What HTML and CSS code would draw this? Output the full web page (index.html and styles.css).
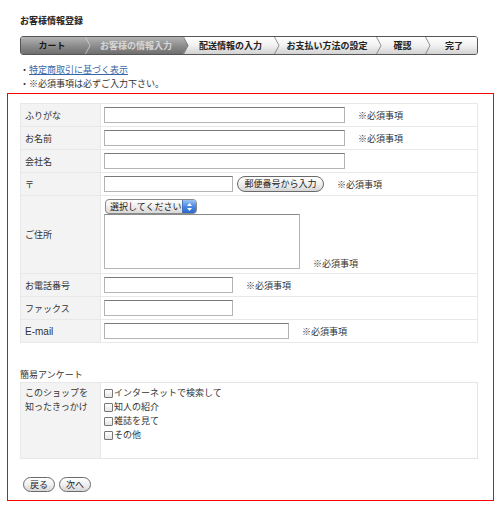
FILE: index.html
```html
<!DOCTYPE html>
<html lang="ja">
<head>
<meta charset="utf-8">
<title>お客様情報登録</title>
<link rel="stylesheet" href="styles.css">
</head>
<body>
<svg class="defs" width="0" height="0" aria-hidden="true">
  <defs>
    <linearGradient id="g-dark" x1="0" y1="0" x2="0" y2="1">
      <stop offset="0" stop-color="#b4b4b4"/>
      <stop offset="0.5" stop-color="#8e8e8e"/>
      <stop offset="1" stop-color="#6e6e6e"/>
    </linearGradient>
    <linearGradient id="g-light" x1="0" y1="0" x2="0" y2="1">
      <stop offset="0" stop-color="#ffffff"/>
      <stop offset="0.5" stop-color="#f1f1f1"/>
      <stop offset="1" stop-color="#d2d2d2"/>
    </linearGradient>
  </defs>
</svg>

<div class="page">
  <header class="head">
    <h1 class="title">お客様情報登録</h1>

    <ol class="steps">
      <li class="step step-done w1">カート</li>
      <li class="sep"><svg viewBox="0 0 8 17" preserveAspectRatio="none"><polygon points="0,0 2,0 7,8.5 2,17 0,17" fill="url(#g-dark)"/><polygon points="2,0 8,0 8,17 2,17 7,8.5" fill="url(#g-dark)"/><polyline points="2,-1 7,8.5 2,18" fill="none" stroke="#c8c8c8" stroke-width="0.8"/></svg></li>
      <li class="step step-current w2">お客様の情報入力</li>
      <li class="sep"><svg viewBox="0 0 8 17" preserveAspectRatio="none"><polygon points="0,0 2,0 7,8.5 2,17 0,17" fill="url(#g-dark)"/><polygon points="2,0 8,0 8,17 2,17 7,8.5" fill="url(#g-light)"/><polyline points="2,-1 7,8.5 2,18" fill="none" stroke="#555" stroke-width="0.8"/></svg></li>
      <li class="step w3">配送情報の入力</li>
      <li class="sep"><svg viewBox="0 0 8 17" preserveAspectRatio="none"><polygon points="0,0 8,0 8,17 0,17" fill="url(#g-light)"/><polyline points="2,-1 7,8.5 2,18" fill="none" stroke="#777" stroke-width="0.8"/></svg></li>
      <li class="step w4">お支払い方法の設定</li>
      <li class="sep"><svg viewBox="0 0 8 17" preserveAspectRatio="none"><polygon points="0,0 8,0 8,17 0,17" fill="url(#g-light)"/><polyline points="2,-1 7,8.5 2,18" fill="none" stroke="#777" stroke-width="0.8"/></svg></li>
      <li class="step w5">確認</li>
      <li class="sep"><svg viewBox="0 0 8 17" preserveAspectRatio="none"><polygon points="0,0 8,0 8,17 0,17" fill="url(#g-light)"/><polyline points="2,-1 7,8.5 2,18" fill="none" stroke="#777" stroke-width="0.8"/></svg></li>
      <li class="step w6">完了</li>
    </ol>

    <ul class="notes">
      <li>・<a href="#" class="link">特定商取引に基づく表示</a></li>
      <li>・※必須事項は必ずご入力下さい。</li>
    </ul>
  </header>

  <form class="form-box">
    <table class="form-table">
      <tr>
        <th>ふりがな</th>
        <td><input class="field w-long" type="text"><span class="req">※必須事項</span></td>
      </tr>
      <tr>
        <th>お名前</th>
        <td><input class="field w-long" type="text"><span class="req">※必須事項</span></td>
      </tr>
      <tr>
        <th>会社名</th>
        <td><input class="field w-long" type="text"></td>
      </tr>
      <tr>
        <th>〒</th>
        <td><input class="field w-short" type="text"><button type="button" class="pill zip-btn">郵便番号から入力</button><span class="req">※必須事項</span></td>
      </tr>
      <tr class="row-address">
        <th>ご住所</th>
        <td>
          <div class="select">
            <span class="select-text">選択してください</span>
            <span class="select-arrow"><svg width="7" height="10" viewBox="0 0 7 10"><polygon points="3.5,1 6,4 1,4" fill="#fff"/><polygon points="1,6 6,6 3.5,9" fill="#fff"/></svg></span>
          </div>
          <div class="address-line">
            <textarea class="area"></textarea><span class="req">※必須事項</span>
          </div>
        </td>
      </tr>
      <tr>
        <th>お電話番号</th>
        <td><input class="field w-short" type="text"><span class="req">※必須事項</span></td>
      </tr>
      <tr>
        <th>ファックス</th>
        <td><input class="field w-short" type="text"></td>
      </tr>
      <tr>
        <th class="latin">E-mail</th>
        <td><input class="field w-mail" type="text"><span class="req">※必須事項</span></td>
      </tr>
    </table>

    <h2 class="survey-title">簡易アンケート</h2>
    <table class="form-table survey">
      <tr>
        <th>このショップを<br>知ったきっかけ</th>
        <td>
          <label class="check"><input type="checkbox">インターネットで検索して</label>
          <label class="check"><input type="checkbox">知人の紹介</label>
          <label class="check"><input type="checkbox">雑誌を見て</label>
          <label class="check"><input type="checkbox">その他</label>
        </td>
      </tr>
    </table>

    <div class="actions">
      <button type="button" class="pill nav-btn">戻る</button>
      <button type="button" class="pill nav-btn">次へ</button>
    </div>
  </form>
</div>
</body>
</html>
```

FILE: styles.css
```css
html, body {
  margin: 0;
  padding: 0;
  background: #fff;
}

body {
  font-family: "Liberation Sans", "Noto Sans CJK JP", sans-serif;
  font-size: 9px;
  color: #333;
}

.defs {
  position: absolute;
  width: 0;
  height: 0;
}

.page {
  padding: 15px 0 0 7px;
}

.head {
  margin-left: 13px;
  width: 458px;
}

.title {
  margin: 0;
  font-size: 9px;
  line-height: 12px;
  font-weight: bold;
  color: #222;
}

/* progress bar */
.steps {
  display: flex;
  margin: 9px 0 0;
  padding: 0;
  list-style: none;
  height: 17px;
  border: 1px solid #555;
  border-radius: 3px;
  overflow: hidden;
  background: linear-gradient(#fff, #f1f1f1 50%, #d2d2d2);
}

.step {
  display: flex;
  align-items: center;
  justify-content: center;
  height: 17px;
  font-weight: bold;
  color: #222;
  background: linear-gradient(#fff, #f1f1f1 50%, #d2d2d2);
  white-space: nowrap;
}

.step-done,
.step-current {
  background: linear-gradient(#b4b4b4, #8e8e8e 50%, #6e6e6e);
}

.step-done {
  color: #1a1a1a;
}

.step-current {
  color: #d6d6d6;
}

.w1 { width: 62px; }
.w2 { width: 90px; }
.w3 { width: 83px; }
.w4 { width: 94px; }
.w5 { width: 41px; }
.w6 { width: 46px; }

.sep {
  width: 8px;
  height: 17px;
}

.sep svg {
  display: block;
  width: 8px;
  height: 17px;
}

.notes {
  margin: 8px 0 0;
  padding: 0;
  list-style: none;
  line-height: 14px;
  color: #333;
}

.link {
  color: #3a66a8;
  text-decoration: underline;
}

/* form container */
.form-box {
  margin: 2px 0 0;
  width: 487px;
  border: 1px solid #f00;
  padding: 9px 0 8px 12px;
  box-sizing: border-box;
}

.form-table {
  width: 458px;
  border-collapse: collapse;
}

.form-table th,
.form-table td {
  border: 1px solid #e8e8e8;
  height: 22px;
  padding: 0;
  vertical-align: middle;
}

.form-table th {
  width: 75px;
  padding-left: 4px;
  text-align: left;
  font-weight: normal;
  background: #f3f3f3;
  color: #333;
  white-space: nowrap;
}

.form-table th.latin {
  font-size: 10px;
}

.form-table td {
  padding-left: 3px;
  background: #fff;
  white-space: nowrap;
}

.field {
  display: inline-block;
  box-sizing: border-box;
  height: 16px;
  margin: 0;
  padding: 0 2px;
  border: 1px solid #b4b4b4;
  border-top-color: #7a7a7a;
  background: #fff;
  vertical-align: middle;
  font: inherit;
}

.w-long { width: 241px; }
.w-short { width: 129px; }
.w-mail { width: 185px; }

.req {
  margin-left: 13px;
  vertical-align: middle;
  color: #333;
}

.pill {
  font-family: inherit;
  font-size: 9px;
  color: #222;
  height: 16px;
  padding: 0 6px;
  border: 1px solid #6a6a6a;
  border-radius: 8px;
  background: linear-gradient(#ffffff, #f0f0f0 50%, #d6d6d6);
  vertical-align: middle;
  line-height: 14px;
}

.zip-btn {
  width: 87px;
  margin-left: 4px;
  padding: 0;
}

.zip-btn + .req {
  margin-left: 13px;
}

/* address row */
.row-address td {
  height: 76px;
  padding-top: 3px;
  padding-bottom: 4px;
  vertical-align: top;
  box-sizing: border-box;
}

.row-address th {
  vertical-align: middle;
}

.select {
  display: inline-flex;
  align-items: stretch;
  height: 15px;
  width: 92px;
  margin-left: 1px;
  box-sizing: border-box;
  border: 1px solid #8a8a8a;
  border-radius: 4px;
  overflow: hidden;
  background: linear-gradient(#ffffff, #eeeeee 50%, #d8d8d8);
}

.select-text {
  flex: 1;
  display: flex;
  align-items: center;
  padding-left: 4px;
  color: #222;
  white-space: nowrap;
  overflow: hidden;
}

.select-arrow {
  width: 13px;
  display: flex;
  align-items: center;
  justify-content: center;
  background: linear-gradient(#9cc4f4, #4a8ae4 50%, #2a66cc);
  border-left: 1px solid #4a74b8;
}

.address-line {
  display: flex;
  align-items: flex-end;
  margin-top: 0;
}

.area {
  display: block;
  box-sizing: border-box;
  width: 196px;
  height: 55px;
  margin: 0;
  border: 1px solid #b4b4b4;
  border-top-color: #8a8a8a;
  resize: none;
  background: #fff;
}

.address-line .req {
  margin-left: 13px;
  line-height: 10px;
  vertical-align: baseline;
}

/* survey */
.survey-title {
  margin: 25px 0 0;
  font-size: 9px;
  font-weight: normal;
  line-height: 14px;
  color: #333;
}

.survey th,
.survey td {
  height: 76px;
  vertical-align: top;
  padding-top: 3px;
  box-sizing: border-box;
  line-height: 14px;
}

.survey th {
  width: 80px;
}

.survey td {
  border-color: #e4e4e4;
  padding-left: 3px;
}

.check {
  display: flex;
  align-items: center;
  height: 14px;
  color: #333;
}

.check input {
  appearance: none;
  -webkit-appearance: none;
  width: 9px;
  height: 9px;
  margin: 0 1px 0 0;
  border: 1px solid #777;
  border-radius: 1px;
  background: linear-gradient(#fff, #e4e4e4);
  box-sizing: border-box;
}

.actions {
  display: flex;
  gap: 4px;
  margin-top: 18px;
  padding-left: 3px;
}

.nav-btn {
  width: 32px;
  padding: 0;
  height: 15px;
}
```
